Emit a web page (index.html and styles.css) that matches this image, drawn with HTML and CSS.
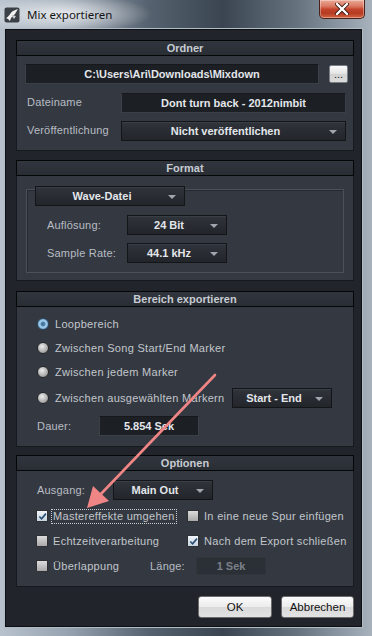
FILE: index.html
```html
<!DOCTYPE html>
<html lang="de">
<head>
  <meta charset="UTF-8" />
  <title>Mix exportieren</title>
  <meta name="viewport" content="width=device-width, initial-scale=1.0" />
  <link rel="stylesheet" href="styles.css">
</head>
<body>

  <div class="window">

    <!-- Title bar -->
    <div class="titlebar">
      <svg class="app-icon" viewBox="0 0 16 16">
        <rect x="0.5" y="0.5" width="15" height="15" rx="2" fill="#3b4047" />
        <path d="M2 11 C5 10 6 6 9 4 L14 2 L11 7 C9 9 7 10 6 14 L4 12 Z" fill="#f2f2f2" />
        <path d="M7 8 L12 9 L10 12 Z" fill="#c9ccd0" />
      </svg>
      <span class="title">Mix exportieren</span>
      <div class="close">
        <svg viewBox="0 0 14 12" width="14" height="12">
          <path d="M2 1 L12 11 M12 1 L2 11" stroke="#3a1a14" stroke-width="4" stroke-linecap="round" />
          <path d="M2 1 L12 11 M12 1 L2 11" stroke="#ffffff" stroke-width="2.4" stroke-linecap="round" />
        </svg>
      </div>
    </div>

    <div class="client">

      <!-- Ordner -->
      <section class="panel ordner">
        <div class="panel-head">Ordner</div>
        <div class="panel-body ordner-body">
          <div class="row">
            <div class="field path">C:\Users\Ari\Downloads\Mixdown</div>
            <button class="dots">...</button>
          </div>
          <div class="row gap9">
            <span class="label w96">Dateiname</span>
            <div class="field wide">Dont turn back - 2012nimbit</div>
          </div>
          <div class="row gap8">
            <span class="label w96">Veröffentlichung</span>
            <div class="dropdown wide"><span class="dd-text">Nicht veröffentlichen</span><span class="arrow"></span></div>
          </div>
        </div>
      </section>

      <!-- Format -->
      <section class="panel format">
        <div class="panel-head">Format</div>
        <div class="groupbox">
          <div class="dropdown wave"><span class="dd-text">Wave-Datei</span><span class="arrow"></span></div>
          <div class="row gap9 indent">
            <span class="label w80">Auflösung:</span>
            <div class="dropdown w100"><span class="dd-text">24 Bit</span><span class="arrow"></span></div>
          </div>
          <div class="row gap8 indent">
            <span class="label w80">Sample Rate:</span>
            <div class="dropdown w100"><span class="dd-text">44.1 kHz</span><span class="arrow"></span></div>
          </div>
        </div>
      </section>

      <!-- Bereich exportieren -->
      <section class="panel bereich">
        <div class="panel-head">Bereich exportieren</div>
        <div class="panel-body bereich-body">
          <div class="row radio-row">
            <span class="radio selected"></span><span class="opt">Loopbereich</span>
          </div>
          <div class="row radio-row gap4">
            <span class="radio"></span><span class="opt">Zwischen Song Start/End Marker</span>
          </div>
          <div class="row radio-row gap4">
            <span class="radio"></span><span class="opt">Zwischen jedem Marker</span>
          </div>
          <div class="row radio-row gap6">
            <span class="radio"></span><span class="opt">Zwischen ausgewählten Markern</span>
            <div class="dropdown w100 push"><span class="dd-text">Start - End</span><span class="arrow"></span></div>
          </div>
          <div class="row gap8">
            <span class="label w62">Dauer:</span>
            <div class="field w100">5.854 Sek</div>
          </div>
        </div>
      </section>

      <!-- Optionen -->
      <section class="panel optionen">
        <div class="panel-head">Optionen</div>
        <div class="panel-body optionen-body">
          <div class="row">
            <span class="label w76">Ausgang:</span>
            <div class="dropdown w100"><span class="dd-text">Main Out</span><span class="arrow"></span></div>
          </div>
          <div class="checks">
            <div class="check-item">
              <span class="checkbox checked"></span><span class="opt focus">Mastereffekte umgehen</span>
            </div>
            <div class="check-item">
              <span class="checkbox"></span><span class="opt">In eine neue Spur einfügen</span>
            </div>
            <div class="check-item">
              <span class="checkbox"></span><span class="opt">Echtzeitverarbeitung</span>
            </div>
            <div class="check-item">
              <span class="checkbox checked"></span><span class="opt">Nach dem Export schließen</span>
            </div>
          </div>
          <div class="row overlap-row">
            <div class="check-item w114">
              <span class="checkbox"></span><span class="opt">Überlappung</span>
            </div>
            <span class="label w46">Länge:</span>
            <div class="field disabled">1 Sek</div>
          </div>
        </div>
      </section>

      <div class="buttons">
        <button class="btn ok">OK</button>
        <button class="btn cancel">Abbrechen</button>
      </div>

    </div>

    <!-- annotation arrow drawn over the dialog -->
    <svg class="annotation" viewBox="0 0 372 636" width="372" height="636">
      <line x1="215" y1="375" x2="99" y2="496" stroke="#f08585" stroke-width="2.6" stroke-linecap="round" />
      <polygon points="87,508 93,486 109,501" fill="#f08585" />
    </svg>

  </div>

</body>
</html>
```

FILE: styles.css
```css
body {
  margin: 0;
  background: #2a2f36;
  font-family: "Liberation Sans", Arial, sans-serif;
  font-size: 11px;
}

.window {
  position: relative;
  width: 372px;
  height: 636px;
  overflow: hidden;
  background:
    radial-gradient(ellipse 90px 20px at 62px 14px, rgba(236, 238, 241, 0.95), rgba(236, 238, 241, 0)),
    linear-gradient(90deg, #b7c2cd 0%, #97a3b0 18%, #56626f 40%, #3b4552 60%, #66737f 80%, #a7b2bd 100%);
}

/* title bar */

.titlebar {
  height: 28px;
  display: flex;
  align-items: flex-start;
  padding: 0 7px 0 4px;
  box-sizing: border-box;
}

.app-icon {
  width: 16px;
  height: 16px;
  margin-top: 7px;
}

.title {
  margin: 7px 0 0 7px;
  font-family: "Noto Sans", sans-serif;
  font-size: 11.5px;
  line-height: 15px;
  color: #141414;
}

.close {
  margin-left: auto;
  width: 46px;
  height: 19px;
  box-sizing: border-box;
  display: flex;
  align-items: center;
  justify-content: center;
  border: 1px solid #4b2119;
  border-top: none;
  border-radius: 0 0 5px 5px;
  background: linear-gradient(#eaa997 0%, #da7861 35%, #c4442b 52%, #b43a22 72%, #d3633f 100%);
  box-shadow: inset 0 0 0 1px rgba(255, 255, 255, 0.35);
}

/* client area */

.client {
  margin-left: 4px;
  width: 359px;
  height: 600px;
  box-sizing: border-box;
  border: 1px solid #b1bcc7;
  background: #21252b;
  padding: 11px 8px 0 11px;
  box-shadow: inset 0 0 0 1px #0d0f12;
}

.panel {
  box-sizing: border-box;
  background: #343941;
  border: 1px solid #16191d;
}

.ordner { height: 111px; }
.format { height: 121px; margin-top: 9px; }
.bereich { height: 156px; margin-top: 10px; }
.optionen { height: 132px; margin-top: 8px; }

.panel-head {
  height: 16px;
  box-sizing: border-box;
  margin: -1px -1px 0;
  border: 1px solid #050607;
  background: linear-gradient(#31363e, #292d34);
  color: #c7cbd2;
  font-weight: bold;
  text-align: center;
  line-height: 14px;
}

.row {
  display: flex;
  align-items: center;
  height: 20px;
}

.gap4 { margin-top: 4px; }
.gap6 { margin-top: 6px; }
.gap8 { margin-top: 8px; }
.gap9 { margin-top: 9px; }

.label {
  color: #b8bcc4;
  flex: none;
  letter-spacing: 0.2px;
}

.w46 { width: 46px; }
.w62 { width: 62px; }
.w76 { width: 76px; }
.w80 { width: 80px; }
.w96 { width: 96px; }
.w100 { width: 100px; }
.w114 { width: 114px; }

/* text fields */

.field {
  height: 20px;
  box-sizing: border-box;
  background: #1c1f24;
  border: 1px solid #3b4048;
  border-top-color: #16181c;
  color: #e3e6ea;
  font-weight: bold;
  text-align: center;
  line-height: 18px;
}

.field.path { width: 294px; }
.field.wide { width: 225px; }

.field.disabled {
  width: 70px;
  height: 18px;
  line-height: 16px;
  background: #2b2f36;
  border-color: #30343b;
  color: #7b8088;
}

.dots {
  width: 19px;
  height: 18px;
  margin-left: 10px;
  padding: 0;
  border: 1px solid #7a7f86;
  border-radius: 2px;
  background: linear-gradient(#fbfbfb, #e3e3e3 50%, #d2d2d2 51%, #dcdcdc);
  font-family: "Liberation Sans", Arial, sans-serif;
  font-size: 11px;
  line-height: 10px;
  color: #222;
}

/* dropdowns */

.dropdown {
  height: 20px;
  box-sizing: border-box;
  display: flex;
  align-items: center;
  border: 1px solid #131518;
  background: linear-gradient(#30343b, #22252a);
  box-shadow: inset 0 1px 0 rgba(255, 255, 255, 0.05);
  color: #e3e6ea;
  font-weight: bold;
}

.dropdown.wide { width: 225px; }

.dd-text {
  flex: 1;
  text-align: center;
}

.arrow {
  width: 0;
  height: 0;
  margin: 1px 8px 0 0;
  border-left: 4px solid transparent;
  border-right: 4px solid transparent;
  border-top: 4px solid #a1a6ae;
}

/* Ordner body */

.ordner-body {
  padding: 8px 5px 0 8px;
}

.ordner-body .label {
  padding-left: 2px;
  width: 96px;
  box-sizing: border-box;
  margin-top: -3px;
}

/* Format */

.groupbox {
  height: 84px;
  box-sizing: border-box;
  margin: 13px 9px 0;
  border: 1px solid #4b5059;
  box-shadow: inset 1px 1px 0 #262a30;
}

.dropdown.wave {
  width: 150px;
  margin: -4px 0 0 8px;
}

.indent {
  padding-left: 20px;
}

/* Bereich */

.bereich-body {
  padding: 7px 21px 0 20px;
}

.radio-row .opt {
  margin-left: 6px;
}

.opt {
  color: #c2c6cc;
  letter-spacing: 0.3px;
  white-space: nowrap;
}

.radio {
  width: 12px;
  height: 12px;
  box-sizing: border-box;
  border-radius: 50%;
  border: 1px solid #26282c;
  background: radial-gradient(circle at 40% 35%, #ececec, #b3b3b3 55%, #7e7e7e);
  flex: none;
}

.radio.selected {
  border-color: #2d4a63;
  background: radial-gradient(circle, #3f6f95 0, #4f82aa 2px, #a6d2ef 3px, #7fb3da 5px);
}

.push {
  margin-left: auto;
}

/* Optionen */

.optionen-body {
  padding: 9px 0 0 19px;
}

.optionen-body .row .label:first-child {
  margin-left: 1px;
  width: 76px;
}

.checks {
  display: grid;
  grid-template-columns: 151px auto;
  row-gap: 7px;
  margin-top: 7px;
}

.check-item {
  display: flex;
  align-items: center;
  height: 18px;
}

.check-item .opt {
  margin-left: 5px;
}

.check-item .opt.focus {
  margin-left: 3px;
  padding: 0 1px;
  border: 1px dotted #c9cdd2;
  line-height: 13px;
}

.checkbox {
  width: 12px;
  height: 12px;
  box-sizing: border-box;
  flex: none;
  border: 1px solid #2e3034;
  background: linear-gradient(#dcdcdc, #a9a9a9);
}

.checkbox.checked {
  background:
    url("data:image/svg+xml,%3Csvg xmlns='http://www.w3.org/2000/svg' viewBox='0 0 10 10'%3E%3Cpath d='M1.5 5 L4 7.5 L8.8 1.8' fill='none' stroke='%23284c73' stroke-width='1.8'/%3E%3C/svg%3E") center / 9px 9px no-repeat,
    linear-gradient(#f1f5f9, #c5d3e0);
}

.overlap-row {
  margin-top: 7px;
  height: 18px;
}

/* dialog buttons */

.buttons {
  display: flex;
  justify-content: flex-end;
  gap: 9px;
  margin-top: 9px;
}

.btn {
  height: 22px;
  padding: 0;
  border: 1px solid #6c6c6c;
  border-radius: 3px;
  background: linear-gradient(#fcfcfc, #ececec 48%, #dadada 52%, #e2e2e2);
  font-family: "Liberation Sans", Arial, sans-serif;
  font-size: 11.5px;
  color: #111;
}

.btn.ok { width: 74px; }
.btn.cancel { width: 73px; }

.annotation {
  position: absolute;
  left: 0;
  top: 0;
  pointer-events: none;
}
```
